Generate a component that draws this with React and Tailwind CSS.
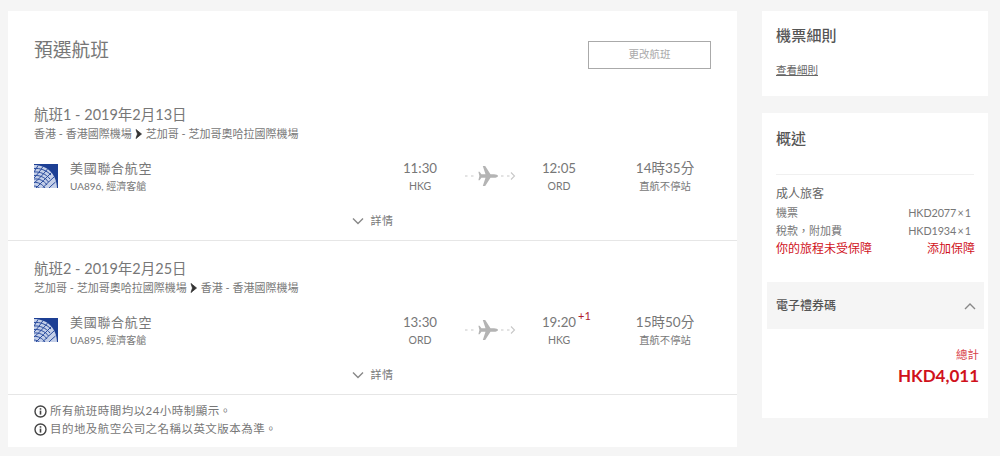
const fontStack = "font-['Lato','Noto_Sans_CJK_TC',sans-serif]";

const flights = [
  {
    title: '航班1 - 2019年2月13日',
    from: '香港 - 香港國際機場',
    to: '芝加哥 - 芝加哥奧哈拉國際機場',
    number: 'UA896, 經濟客艙',
    depart: '11:30',
    departCode: 'HKG',
    arrive: '12:05',
    arriveCode: 'ORD',
    duration: '14時35分',
  },
  {
    title: '航班2 - 2019年2月25日',
    from: '芝加哥 - 芝加哥奧哈拉國際機場',
    to: '香港 - 香港國際機場',
    number: 'UA895, 經濟客艙',
    depart: '13:30',
    departCode: 'ORD',
    arrive: '19:20',
    arriveCode: 'HKG',
    duration: '15時50分',
    nextDay: true,
  },
];

const GlobeLogo = () => (
  <svg width="24" height="24" viewBox="0 0 24 24" className="shrink-0">
    <rect width="24" height="24" fill="#1d3f94" />
    <path d="M0 1C13 1 22.5 10 23 24H0Z" fill="#c4cfe8" />
    <g fill="none" stroke="#2a4c9e" strokeWidth="1">
      <path d="M0 4.5C6 4 12 6 17 11" />
      <path d="M0 8C6 7.5 12 10 16 15" />
      <path d="M0 11.5C5 11 11 13 14.5 18" />
      <path d="M0 15C5 14.5 10 16.5 13 21" />
      <path d="M0 18.5C4 18 8 20 11 24" />
      <path d="M0 22C2 22 4 23 5.5 24" />
      <path d="M4 1.5C2.5 4 1.5 6 0 8" />
      <path d="M9 2.5C6 7 3 11 0 14" />
      <path d="M13.5 5C9 10.5 5 15 0 19" />
      <path d="M17.5 8.5C12 14 7 19 2 24" />
      <path d="M20 13C16 16.5 12 20.5 8.5 24" />
      <path d="M21.5 18C19 20 17 22 15 24" />
    </g>
  </svg>
);

const PlaneGraphic = () => (
  <svg width="52" height="26" viewBox="0 0 52 26" className="shrink-0">
    <path d="M1 13H12" stroke="#c8c8c8" strokeWidth="1.2" strokeDasharray="2.5 3.5" fill="none" />
    <path d="M37 13H49" stroke="#c8c8c8" strokeWidth="1.2" strokeDasharray="2.5 3.5" fill="none" />
    <path d="M47 9.5L50.5 13L47 16.5" stroke="#c8c8c8" strokeWidth="1.1" fill="none" />
    <path
      d="M34 13C34 12 32 11.2 30 11.2H26.5L21.2 3H18.8L21.5 11.2H17.4L15.6 8.8H14.4L15.4 13L14.4 17.2H15.6L17.4 14.8H21.5L18.8 23H21.2L26.5 14.8H30C32 14.8 34 14 34 13Z"
      fill="#b4b4b4"
    />
  </svg>
);

const ChevronSmall = ({ up }) => (
  <svg width="12" height="8" viewBox="0 0 12 8" className="shrink-0">
    <path d={up ? 'M1 7L6 2L11 7' : 'M1 1.5L6 6.5L11 1.5'} fill="none" stroke="#888" strokeWidth="1.4" />
  </svg>
);

const InfoIcon = () => (
  <svg width="13" height="13" viewBox="0 0 13 13" className="shrink-0">
    <circle cx="6.5" cy="6.5" r="5.5" fill="none" stroke="#444" strokeWidth="1.4" />
    <rect x="5.7" y="5.6" width="1.6" height="4" fill="#444" />
    <rect x="5.7" y="3.2" width="1.6" height="1.5" fill="#444" />
  </svg>
);

const FlightBlock = ({ flight }) => (
  <div className="border-b border-[#e6e6e6] h-[154px] pl-[26px] pr-[26px] pt-[16px]">
    <div className="text-[14.5px] leading-[23px] text-[#777]">{flight.title}</div>
    <div className="flex items-center h-[16px] text-[11px] text-[#777] leading-[16px]">
      <span>{flight.from}</span>
      <svg width="8" height="10" viewBox="0 0 8 10" className="mx-[3px] shrink-0">
        <path d="M1 0.5L6.5 5L1 9.5L2.5 5Z" fill="#333" stroke="#333" strokeWidth="0.8" />
      </svg>
      <span>{flight.to}</span>
    </div>
    <div className="flex items-center mt-[15px] h-[37px]">
      <GlobeLogo />
      <div className="w-[332px] pl-[12px] shrink-0">
        <div className="text-[13px] leading-[21px] tracking-[0.7px] text-[#777]">美國聯合航空</div>
        <div className="text-[10px] leading-[15px] text-[#777]">{flight.number}</div>
      </div>
      <div className="w-[60px] text-center shrink-0">
        <div className="text-[13.3px] leading-[21px] text-[#777]">{flight.depart}</div>
        <div className="text-[10.5px] leading-[15px] text-[#777]">{flight.departCode}</div>
      </div>
      <div className="w-[79px] flex justify-center shrink-0">
        <PlaneGraphic />
      </div>
      <div className="w-[60px] text-center shrink-0">
        <div className="text-[13.3px] leading-[21px] text-[#777] relative">
          {flight.arrive}
          {flight.nextDay && (
            <span className="absolute left-[49px] top-[-3px] text-[11px] leading-[14px] text-[#b01c2e]">+1</span>
          )}
        </div>
        <div className="text-[10.5px] leading-[15px] text-[#777]">{flight.arriveCode}</div>
      </div>
      <div className="w-[152px] text-center shrink-0">
        <div className="text-[13.5px] leading-[21px] text-[#777]">{flight.duration}</div>
        <div className="text-[10.3px] leading-[15px] text-[#777]">直航不停站</div>
      </div>
    </div>
    <div className="flex items-center justify-center gap-[7px] mt-[19px] text-[11px] leading-[16px] tracking-[0.5px] text-[#777]">
      <ChevronSmall />
      <span>詳情</span>
    </div>
  </div>
);

const App = () => {
  return (
    <div className={`${fontStack} min-h-[456px] bg-[#f5f5f5] flex items-start gap-[25px] pl-[8px] pt-[11px]`}>
      <div className="w-[729px] h-[436px] bg-white shrink-0">
        <div className="flex justify-between items-start h-[76px] pl-[26px] pr-[26px] pt-[26px]">
          <h1 className="text-[18.75px] leading-[26px] text-[#777]">預選航班</h1>
          <button className="w-[123px] h-[28px] mt-[4px] border border-[#aaa] text-[10.5px] text-[#aaa]">更改航班</button>
        </div>
        {flights.map(flight => (
          <FlightBlock key={flight.title} flight={flight} />
        ))}
        <div className="pl-[26px] pt-[7px] text-[11.5px] leading-[18px] tracking-[0.45px] text-[#777]">
          <div className="flex items-center gap-[3px]">
            <InfoIcon />
            <span>所有航班時間均以24小時制顯示。</span>
          </div>
          <div className="flex items-center gap-[3px]">
            <InfoIcon />
            <span>目的地及航空公司之名稱以英文版本為準。</span>
          </div>
        </div>
      </div>

      <div className="w-[226px] shrink-0 flex flex-col gap-[17px]">
        <div className="bg-white h-[85px] px-[14px] pt-[13px]">
          <h2 className="text-[15px] leading-[22px] tracking-[0.2px] font-medium text-[#555]">機票細則</h2>
          <a className="block mt-[17px] text-[10.5px] leading-[15px] text-[#666] underline">查看細則</a>
        </div>

        <div className="bg-white h-[305px] pt-[13px]">
          <div className="mx-[14px] h-[49px] border-b border-[#f0f0f0]">
            <h2 className="text-[15px] leading-[24px] font-medium text-[#555]">概述</h2>
          </div>
          <div className="pl-[14px] pr-[13px] pt-[9px]">
            <div className="text-[12px] leading-[20px] text-[#666]">成人旅客</div>
            <div className="flex justify-between pr-[4px] text-[11px] leading-[18px] text-[#777]">
              <span>機票</span>
              <span className="text-[10.8px] tracking-[-0.1px]">HKD2077&thinsp;×&thinsp;1</span>
            </div>
            <div className="flex justify-between pr-[4px] text-[11px] leading-[18px] text-[#777]">
              <span>稅款，附加費</span>
              <span className="text-[10.8px] tracking-[-0.1px]">HKD1934&thinsp;×&thinsp;1</span>
            </div>
            <div className="flex justify-between text-[12px] leading-[18px] text-[#d0111b]">
              <span>你的旅程未受保障</span>
              <span>添加保障</span>
            </div>
          </div>
          <div className="ml-[5px] mr-[4px] mt-[24px] h-[47px] bg-[#f5f5f5] flex items-center justify-between pl-[9px] pr-[8px]">
            <span className="text-[12px] font-medium text-[#555]">電子禮券碼</span>
            <ChevronSmall up />
          </div>
          <div className="pr-[9px] pt-[17px] text-right">
            <div className="text-[11.5px] leading-[18px] text-[#d9434b]">總計</div>
            <div className="text-[17px] leading-[24px] font-bold text-[#d0111b]">HKD4,011</div>
          </div>
        </div>
      </div>
    </div>
  );
};

export default App;
